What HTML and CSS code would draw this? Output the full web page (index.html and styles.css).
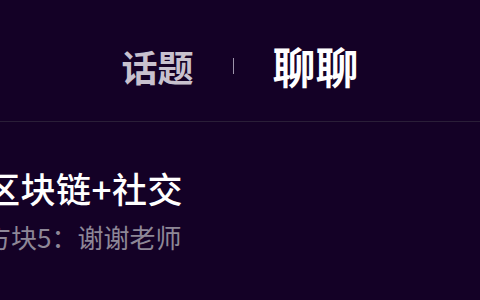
FILE: index.html
```html
<!DOCTYPE html>
<html lang="zh">
<head>
<meta charset="utf-8">
<link rel="stylesheet" href="styles.css">
</head>
<body>
<div class="page">
  <header class="tabs">
    <span class="tab">话题</span>
    <span class="sep"></span>
    <span class="tab active">聊聊</span>
  </header>
  <div class="item">
    <div class="title">区块链+社交</div>
    <div class="sub">方块5：谢谢老师</div>
  </div>
</div>
</body>
</html>
```
FILE: styles.css
```css
html, body {
  margin: 0;
  padding: 0;
  background: #140126;
}
.page {
  width: 480px;
  height: 300px;
  overflow: hidden;
  font-family: "Noto Sans CJK SC", "Noto Sans", sans-serif;
}
.tabs {
  height: 122px;
  box-sizing: border-box;
  padding-top: 10px;
  display: flex;
  justify-content: center;
  align-items: center;
  gap: 39px;
  border-bottom: 1px solid #2a1e38;
}
.tab {
  font-size: 36px;
  font-weight: 700;
  line-height: 1;
  color: #c8c1ce;
}
.tab.active {
  font-size: 43px;
  color: #ffffff;
}
.sep {
  width: 1px;
  height: 16px;
  background: #9d93aa;
}
.item {
  margin-left: -15px;
  padding-top: 48px;
}
.title {
  font-size: 35px;
  font-weight: 500;
  letter-spacing: 0.5px;
  line-height: 36px;
  color: #ffffff;
  white-space: nowrap;
}
.sub {
  margin-top: 16px;
  font-size: 26px;
  line-height: 30px;
  color: #8e8797;
  white-space: nowrap;
}
```
